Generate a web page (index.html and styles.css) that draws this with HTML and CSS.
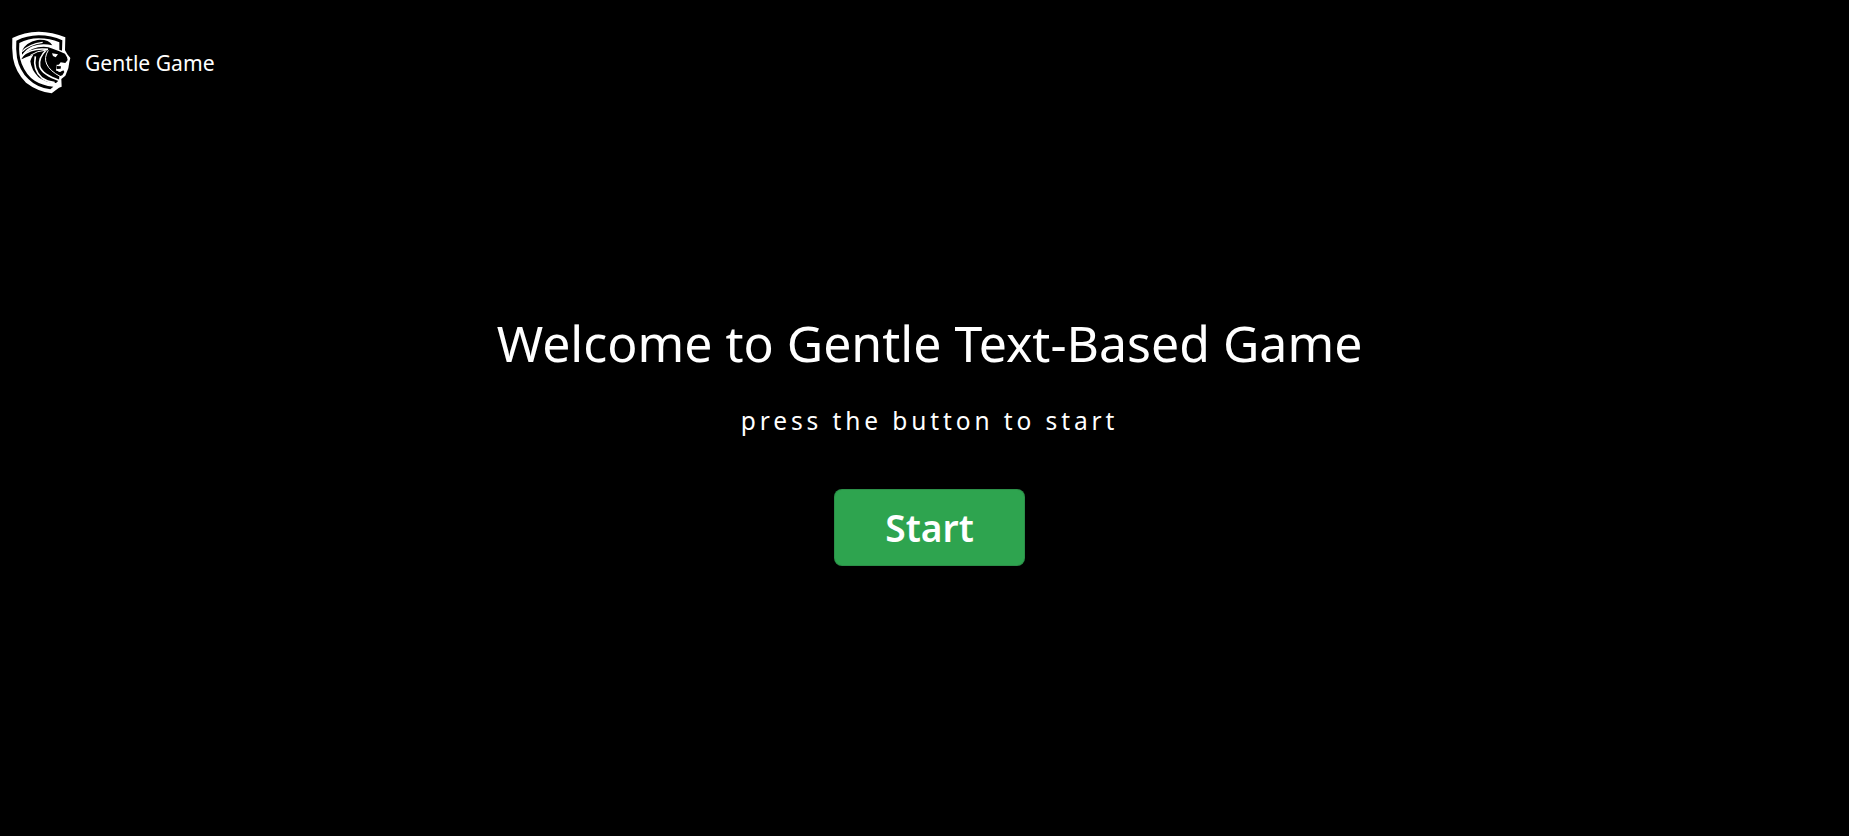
FILE: index.html
```html
<!DOCTYPE html>
<html lang="en">
<head>
<meta charset="utf-8">
<title>Gentle Game</title>
<link rel="stylesheet" href="styles.css">
</head>
<body>
<header class="brand">
<svg class="logo" viewBox="0 0 240 240" aria-hidden="true">
<path fill="#fff" d="M37 54Q72 36 116 35Q158 36 196 52L195 91L202 103L211 114L208 126L205 145L196 167L184 177L185 200L177 203L155 220Q112 214 78 188Q47 158 39 115Q35 85 37 54Z"/>
<path fill="#000" d="M49 62Q80 47 116 46Q154 46 187 61L186 92L178 89L178 67Q150 55 116 55Q84 55 58 69Q55 106 65 131Q79 166 104 182Q126 196 160 200L151 208Q111 203 85 177Q58 151 51 113Q47 87 49 62Z"/>
<path fill="#000" d="M66 92Q78 67 112 60Q145 57 157 76Q125 69 97 79Q80 86 66 105Z"/>
<path fill="none" stroke="#fff" stroke-width="4" d="M66 95Q86 73 128 67"/>
<path fill="#000" d="M64 118Q78 90 114 82Q139 77 158 86L178 94L195 101L201 112L203 120L196 129L182 127L176 135L170 134L168 151L180 156L190 151L193 156L187 166L178 169L177 181L168 189Q135 188 115 171Q94 150 91 124Q94 112 100 104Q74 112 64 118Z"/>
<path fill="none" stroke="#fff" stroke-width="5" d="M65 109Q94 82 144 88M106 109Q98 149 126 174Q141 185 164 188M139 90Q115 112 119 139Q126 164 180 182"/>
<path fill="none" stroke="#fff" stroke-width="3" d="M145 91Q131 113 140 132Q149 153 182 170M91 106Q112 92 135 91"/>
<path fill="#fff" d="M156 100L174 103L167 112L159 108ZM171 135L183 133L190 140L188 151L178 155L168 151L174 146Z"/>
<path fill="#000" d="M170 138L183 139L182 146L170 147Z"/>
</svg>
<span class="brand-name">Gentle Game</span>
</header>
<main class="welcome">
<h1 class="title">Welcome to Gentle Text-Based Game</h1>
<p class="hint">press the button to start</p>
<button class="start" type="button">Start</button>
</main>
</body>
</html>
```
FILE: styles.css
```css
* { box-sizing: border-box; }
body {
  margin: 0;
  height: 836px;
  overflow: hidden;
  background: #000;
  color: #fff;
  font-family: "Noto Sans", sans-serif;
}
.brand {
  display: flex;
  align-items: center;
  height: 100px;
  padding-top: 20px;
}
.logo { width: 80px; height: 80px; }
.brand-name {
  margin-left: 5px;
  padding-top: 5px;
  font-size: 21.1px;
  line-height: 30px;
}
.welcome {
  display: flex;
  flex-direction: column;
  align-items: center;
  padding: 209px 0 0 10px;
}
.title {
  margin: 0;
  font-size: 50px;
  font-weight: 400;
  line-height: 68px;
  white-space: nowrap;
}
.hint {
  margin: 27px 0 0;
  font-size: 24.5px;
  line-height: 34px;
  letter-spacing: 3.9px;
}
.start {
  width: 191px;
  height: 77px;
  margin-top: 51px;
  padding: 1px 0 0;
  border: 1px solid rgba(27, 31, 35, .15);
  border-radius: 8px;
  background: #2ea44f;
  color: #fff;
  font: 600 37.2px/50px "Noto Sans", sans-serif;
}
```
